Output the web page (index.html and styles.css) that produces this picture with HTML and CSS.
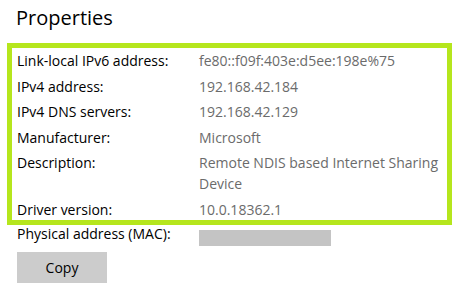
FILE: index.html
```html
<!DOCTYPE html>
<html lang="en">

<head>
  <meta charset="UTF-8">
  <title>Properties</title>
  <link rel="stylesheet" href="styles.css">
</head>

<body>
  <div id="page">
    <h1 class="title">Properties</h1>
    <div class="highlight">
      <dl class="props">
        <dt>Link-local IPv6 address:</dt>
        <dd>fe80::f09f:403e:d5ee:198e%75</dd>
        <dt>IPv4 address:</dt>
        <dd>192.168.42.184</dd>
        <dt>IPv4 DNS servers:</dt>
        <dd>192.168.42.129</dd>
        <dt>Manufacturer:</dt>
        <dd>Microsoft</dd>
        <dt>Description:</dt>
        <dd>Remote NDIS based Internet Sharing Device</dd>
        <dt>Driver version:</dt>
        <dd>10.0.18362.1</dd>
      </dl>
    </div>
    <dl class="props mac">
      <dt>Physical address (MAC):</dt>
      <dd><span class="redacted"></span></dd>
    </dl>
    <button class="copy">Copy</button>
  </div>
</body>

</html>
```

FILE: styles.css
```css
body {
  margin: 0;
  background: #fff;
  font-family: "Open Sans", "Noto Sans", sans-serif;
  color: #000;
}

#page {
  padding: 0;
}

.title {
  margin: 0;
  padding: 4px 0 0 16px;
  height: 43px;
  box-sizing: border-box;
  font-size: 20px;
  font-weight: normal;
  line-height: 28px;
}

.highlight {
  width: 445px;
  margin-left: 7px;
  border: 5px solid #b5e61d;
  box-sizing: border-box;
  padding: 2px 0 0 5px;
}

.props {
  display: grid;
  grid-template-columns: 182px 246px;
  row-gap: 4.6px;
  margin: 0;
  font-size: 14px;
  line-height: 21px;
}

.props dt {
  margin: 0;
}

.props dd {
  margin: 0;
  color: #6b6b6b;
}

.mac {
  margin-left: 17px;
  line-height: 18px;
  height: 18px;
}

.redacted {
  display: block;
  width: 132px;
  height: 16px;
  margin-top: 5px;
  background: #c4c4c4;
}

.copy {
  display: block;
  margin: 9px 0 0 17px;
  width: 90px;
  height: 31px;
  border: none;
  background: #cccccc;
  font-family: inherit;
  font-size: 14px;
  color: #000;
  padding: 0;
}
```
